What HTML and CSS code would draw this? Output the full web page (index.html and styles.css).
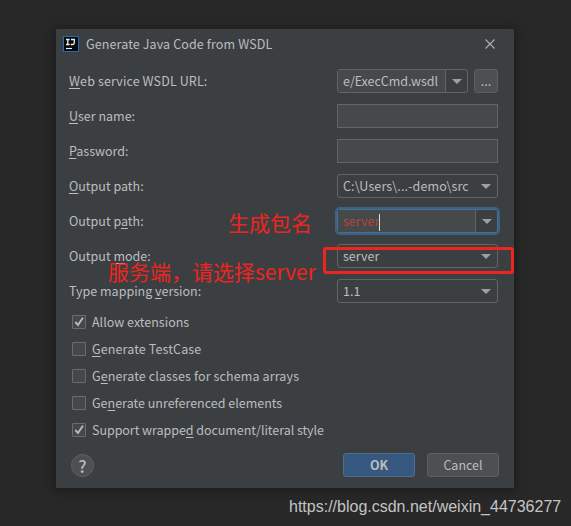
FILE: index.html
```html
<!DOCTYPE html>
<html lang="en">
<head>
<meta charset="utf-8">
<title>Generate Java Code from WSDL</title>
<link rel="stylesheet" href="styles.css">
</head>
<body>
<main class="dialog">
  <header class="titlebar">
    <svg class="logo" width="16" height="16" viewBox="0 0 16 16"><rect x=".5" y=".5" width="15" height="15" fill="#08090c" stroke="#246cb5"/><path d="M3 3.5h3.6M4.8 3.5v4.9M3 8.5h3.6M8 3.5h3.3v3.3q0 1.7-1.6 1.7H7.7" fill="none" stroke="#eee" stroke-width="1.3"/><path d="M3 12.5h6" stroke="#eee" stroke-width="1.1"/></svg>
    <h1 class="title wide">Generate Java Code from WSDL</h1>
    <svg class="close" width="10" height="10" viewBox="0 0 10 10"><path d="M.5.5l9 9M9.5.5l-9 9" stroke="#afb1b3" stroke-width="1.1"/></svg>
  </header>
  <section class="form">
    <div class="row"><label class="wide"><u>W</u>eb service WSDL URL:</label><div class="combo short split"><span class="value">e/ExecCmd.wsdl</span><span class="drop"><i class="arrow"></i></span></div><button class="btn browse">...</button></div>
    <div class="row"><label><u>U</u>ser name:</label><div class="field"></div></div>
    <div class="row"><label><u>P</u>assword:</label><div class="field"></div></div>
    <div class="row"><label><u>O</u>utput path:</label><div class="combo"><span class="value wide">C:\Users\...-demo\src</span><span class="drop"><i class="arrow"></i></span></div></div>
    <div class="row"><label>Output p<u>a</u>th:</label><div class="combo split focus"><span class="value error">server<i class="caret"></i></span><span class="drop"><i class="arrow"></i></span></div></div>
    <div class="row"><label>Output <u>m</u>ode:</label><div class="combo"><span class="value">server</span><span class="drop"><i class="arrow"></i></span></div></div>
    <div class="row"><label>Type mapping <u>v</u>ersion:</label><div class="combo"><span class="value">1.1</span><span class="drop"><i class="arrow"></i></span></div></div>
  </section>
  <section class="checks">
    <div class="check"><span class="box"><svg width="12" height="12" viewBox="0 0 12 12"><path d="M2.3 6l2.7 3L9.9 1.8" fill="none" stroke="#bbb" stroke-width="1.9"/></svg></span><span>Allow extensions</span></div>
    <div class="check"><span class="box"></span><span class="wide"><u>G</u>enerate TestCase</span></div>
    <div class="check"><span class="box"></span><span class="wide">G<u>e</u>nerate classes for schema arrays</span></div>
    <div class="check"><span class="box"></span><span>Ge<u>n</u>erate unreferenced elements</span></div>
    <div class="check"><span class="box"><svg width="12" height="12" viewBox="0 0 12 12"><path d="M2.3 6l2.7 3L9.9 1.8" fill="none" stroke="#bbb" stroke-width="1.9"/></svg></span><span class="tight">Support wrappe<u>d</u> document/literal style</span></div>
  </section>
  <footer class="footer">
    <span class="help">?</span>
    <button class="btn ok">OK</button>
    <button class="btn cancel">Cancel</button>
  </footer>
</main>
<div class="note note-package">生成包名</div>
<div class="note note-mode">服务端，请选择server</div>
<div class="highlight"></div>
<div class="watermark">https://blog.csdn.net/weixin_44736277</div>
</body>
</html>
```
FILE: styles.css
```css
* { box-sizing: border-box; }
body {
  margin: 0;
  width: 571px;
  height: 526px;
  padding: 29px 0 0 56px;
  overflow: hidden;
  position: relative;
  background: #282828;
  color: #bbbdbf;
  font: 12.5px/24px "Noto Sans CJK SC", "Noto Sans", sans-serif;
}
u { text-decoration-thickness: 1px; text-underline-offset: 2px; text-decoration-skip-ink: none; }
.wide { letter-spacing: .12px; }
.tight { letter-spacing: -.05px; }
.dialog {
  width: 458px;
  height: 459px;
  background: #3c3f41;
  box-shadow: 0 1px 8px 2px #1c1c1c;
}
.titlebar { display: flex; align-items: center; height: 29px; padding: 0 19px 0 7px; }
.title { margin: 0 auto 0 7px; font-size: 12.5px; font-weight: 400; }
.form { display: flex; flex-direction: column; gap: 11px; padding: 11px 15px 0 13px; }
.row { display: flex; height: 24px; }
.row label { width: 268px; flex: none; white-space: nowrap; }
.field { width: 161px; height: 24px; background: #45494a; border: 1px solid #646464; }
.combo {
  display: flex;
  width: 161px;
  height: 24px;
  border: 1px solid #646464;
  border-radius: 3px;
  line-height: 22px;
}
.short { width: 131px; }
.short .value { letter-spacing: -.05px; }
.value { flex: 1; min-width: 0; padding-left: 5px; white-space: nowrap; }
.drop { width: 22px; flex: none; display: flex; align-items: center; justify-content: center; }
.split .value { background: #45494a; }
.split .drop { border-left: 1px solid #646464; }
.arrow { border: 5px solid transparent; border-top: 5px solid #9da0a2; border-bottom: 0; }
.focus { border-color: #466d94; box-shadow: 0 0 0 2px #3d6185; }
.error { color: #b34540; }
.caret { display: inline-block; width: 1px; height: 17px; background: #ddd; vertical-align: middle; }
.btn {
  height: 24px;
  padding: 0;
  color: #bbbdbf;
  font: inherit;
  line-height: 22px;
  background: #4c5052;
  border: 1px solid #5e6060;
  border-radius: 3px;
}
.browse { width: 24px; margin-left: 6px; }
.checks { padding: 5px 0 0 16px; }
.check { display: flex; align-items: center; gap: 6px; height: 27px; }
.box { width: 14px; height: 14px; border: 1px solid #6b6b6b; background: #43494a; border-radius: 1px; }
.box svg { display: block; }
.footer { display: flex; align-items: center; padding: 10px 15px 0 15px; }
.help {
  width: 23px;
  height: 23px;
  border: 1px solid #5e6060;
  border-radius: 50%;
  background: #4c5052;
  font-size: 17px;
  font-weight: 500;
  line-height: 21px;
  text-align: center;
  margin-right: auto;
}
.ok { width: 72px; background: #365880; border-color: #4c708c; font-weight: 700; }
.cancel { width: 72px; margin-left: 12px; }
.note { position: absolute; color: #ee251e; font-size: 21px; line-height: 30px; white-space: nowrap; }
.note-package { left: 228px; top: 207px; }
.note-mode { left: 108px; top: 256px; }
.highlight { position: absolute; left: 323px; top: 247px; width: 191px; height: 27px; border: 3px solid #ee251e; border-radius: 3px; }
.watermark {
  position: absolute;
  left: 289px;
  top: 496px;
  color: #c4c4c4;
  font: 16px/22px "Liberation Sans", sans-serif;
}
```
